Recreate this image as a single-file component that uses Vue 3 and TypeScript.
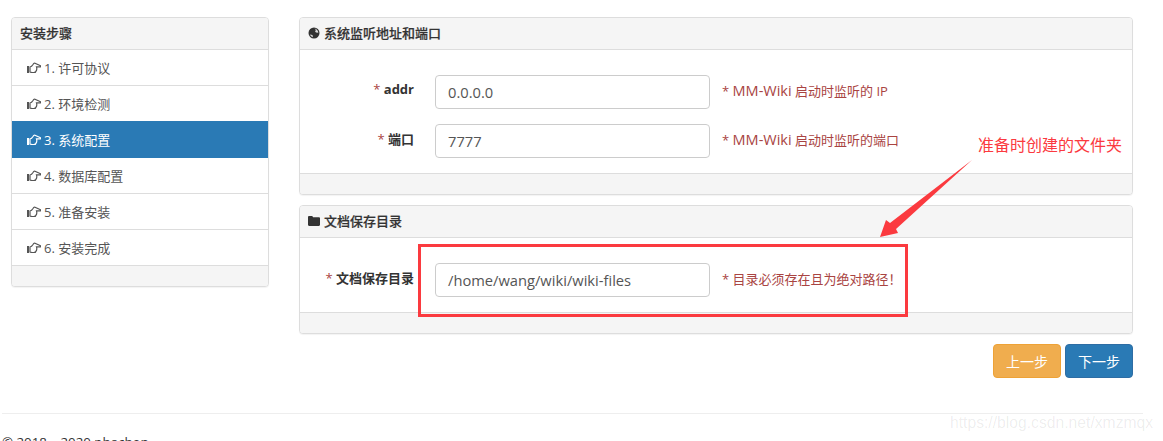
<script setup lang="ts">
const steps = [
  { label: '1. 许可协议' },
  { label: '2. 环境检测' },
  { label: '3. 系统配置', active: true },
  { label: '4. 数据库配置' },
  { label: '5. 准备安装' },
  { label: '6. 安装完成' }
]
</script>

<template>
  <div class="page">
    <div class="row">
      <div class="panel sidebar">
        <div class="panel-heading">安装步骤</div>
        <div class="step" v-for="step in steps" :key="step.label" :class="{ active: step.active }">
          <svg class="hand" viewBox="0 0 14 12" width="14" height="12">
            <path d="M0 4h2v7H0z" fill="currentColor" />
            <path d="M3 5c1.400-.3 2.100-1 2.800-2.200C6.500 1.500 7.200.8 8 1.200l5.500 2.600c.6.4.2 1.200-.5 1H9.500c.6 1.600.3 5.700-2.500 5.700H5c-.8 0-1.400-.3-2-.5z" fill="none" stroke="currentColor" stroke-width="1.200" />
          </svg>
          <span>{{ step.label }}</span>
        </div>
        <div class="panel-footer" />
      </div>

      <div class="main">
        <div class="panel">
          <div class="panel-heading">
            <svg class="head-icon" viewBox="0 0 12 12" width="12" height="12">
              <circle cx="6" cy="6" r="5.500" fill="#333" />
              <path d="M4.500 1.500l2.500.5.500 1.500-1.500 1 .5 1.500 2 .5 1.500 1L8 10.500 6 9 5.500 7 3 5.500 2.500 3.500z" fill="#333" />
              <path d="M6.500 1.500L8 3l-1 1.200 1 1.300 2.300.2c0-2-1.700-3.900-3.800-4.200zM2 7.500c.5 1.300 1.500 2.300 3 2.700L4.500 8z" fill="#d8d8d8" />
            </svg>
            系统监听地址和端口
          </div>
          <div class="panel-body">
            <div class="form-row">
              <label><em>*</em> addr</label>
              <div class="input">0.0.0.0</div>
              <span class="help">* <span class="latin">MM-Wiki</span> 启动时监听的 IP</span>
            </div>
            <div class="form-row">
              <label><em>*</em> 端口</label>
              <div class="input">7777</div>
              <span class="help">* <span class="latin">MM-Wiki</span> 启动时监听的端口</span>
            </div>
          </div>
          <div class="panel-footer" />
        </div>

        <div class="panel">
          <div class="panel-heading">
            <svg class="head-icon" viewBox="0 0 12 10" width="12" height="10">
              <path d="M0 1.200C0 .5.500 0 1.200 0h2.600c.6 0 1 .4 1.200 1.200h5.800c.7 0 1.200.5 1.200 1.200v6.400c0 .7-.5 1.200-1.200 1.200H1.200C.5 10 0 9.500 0 8.800z" fill="#333" />
            </svg>
            文档保存目录
          </div>
          <div class="panel-body">
            <div class="form-row">
              <label><em>*</em> 文档保存目录</label>
              <div class="input">/home/wang/wiki/wiki-files</div>
              <span class="help">* 目录必须存在且为绝对路径！</span>
            </div>
          </div>
          <div class="panel-footer" />
        </div>

        <div class="actions">
          <button class="btn warning">上一步</button>
          <button class="btn primary">下一步</button>
        </div>
      </div>
    </div>

    <hr />
    <div class="copyright">© 2018 – 2020 phachon</div>

    <div class="red-box" />
    <div class="note">准备时创建的文件夹</div>
    <svg class="arrow" viewBox="0 0 110 90" width="110" height="90">
      <path d="M102 5L20 68l-4-3-6 17 18-4-2-4z" fill="#fb3a3f" />
    </svg>
    <div class="watermark">https://blog.csdn.net/xmzmqx</div>
  </div>
</template>

<style scoped>
.page {
  position: relative;
  height: 441px;
  overflow: hidden;
  box-sizing: border-box;
  padding: 17px 30px 0 11px;
  font-family: "Open Sans", "Noto Sans CJK SC", sans-serif;
  font-size: 13px;
  color: #333;
}
.row {
  display: flex;
  gap: 30px;
  align-items: flex-start;
}
.sidebar {
  width: 258px;
  box-sizing: border-box;
  flex: none;
}
.main {
  flex: 1;
  display: flex;
  flex-direction: column;
  gap: 10px;
}
.panel {
  border: 1px solid #ddd;
  border-radius: 4px;
  background: #fff;
  box-shadow: 0 1px 1px rgba(0, 0, 0, 0.05);
  overflow: hidden;
}
.panel-heading {
  height: 32px;
  box-sizing: border-box;
  padding: 0 8px 2px;
  display: flex;
  align-items: center;
  gap: 4px;
  background: #f5f5f5;
  border-bottom: 1px solid #ddd;
  font-weight: 500;
  -webkit-text-stroke: 0.2px #333;
}
.panel-footer {
  height: 20px;
  background: #f5f5f5;
  border-top: 1px solid #ddd;
}
.step {
  height: 36px;
  box-sizing: border-box;
  padding: 0 15px;
  display: flex;
  align-items: center;
  gap: 3px;
  font-size: 13px;
  color: #555;
  border-top: 1px solid #ddd;
}
.panel-heading + .step {
  height: 35px;
  border-top: 0;
}
.step.active {
  height: 37px;
  background: #2a7ab5;
  color: #fff;
  border-top: 0;
}
.step.active + .step {
  height: 35px;
  border-top: 0;
}
.hand {
  flex: none;
}
.head-icon {
  flex: none;
}
.panel-body {
  padding: 25px 0 15px;
  display: flex;
  flex-direction: column;
  gap: 15px;
}
.form-row {
  display: flex;
  align-items: center;
  height: 34px;
}
label {
  width: 114px;
  flex: none;
  text-align: right;
  font-weight: 700;
  margin-top: -6px;
}
label em {
  font-style: normal;
  font-weight: 400;
  color: #a94442;
}
.input {
  margin-left: 21px;
  width: 275px;
  height: 34px;
  flex: none;
  box-sizing: border-box;
  padding: 0 12px;
  display: flex;
  align-items: center;
  border: 1px solid #ccc;
  border-radius: 4px;
  font-size: 14.700px;
  color: #555;
}
.help {
  margin-left: 12px;
  margin-top: -3px;
  color: #a94442;
}
.latin {
  font-size: 14.500px;
}
.actions {
  display: flex;
  justify-content: flex-end;
  gap: 4px;
}
.btn {
  width: 68px;
  height: 34px;
  border: 1px solid;
  border-radius: 4px;
  color: #fff;
  font-family: inherit;
  font-size: 14px;
  padding: 0;
}
.warning {
  background: #f0ad4e;
  border-color: #eea236;
}
.primary {
  background: #2a7ab5;
  border-color: #2e6da4;
}
hr {
  margin: 35px -10px 0 -9px;
  border: 0;
  border-top: 1px solid #eee;
}
.copyright {
  margin: 19px 0 0 -9px;
  font-size: 13.300px;
  line-height: 18px;
}
.red-box {
  position: absolute;
  left: 418px;
  top: 244px;
  width: 490px;
  height: 73px;
  box-sizing: border-box;
  border: 3px solid #fb3a3f;
}
.note {
  position: absolute;
  left: 978px;
  top: 132px;
  font-size: 16px;
  color: #fb3a3f;
}
.arrow {
  position: absolute;
  left: 870px;
  top: 155px;
}
.watermark {
  position: absolute;
  left: 950px;
  top: 414px;
  font-family: "Liberation Sans", sans-serif;
  font-size: 15.700px;
  color: rgba(0, 0, 0, 0.08);
}
</style>
